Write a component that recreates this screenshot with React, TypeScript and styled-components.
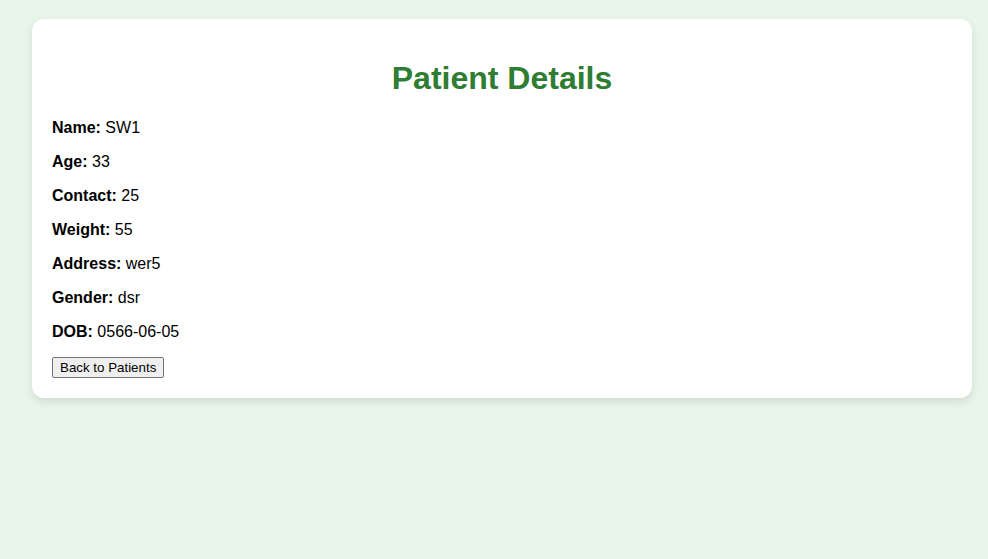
import React from 'react';
import styled, {createGlobalStyle} from 'styled-components';

const GlobalStyle = createGlobalStyle`
  html, body {
    margin: 0;
    background: #e8f5e9;
    font-family: "Liberation Sans", Arial, sans-serif;
  }
`

const Page = styled.div`
  padding: 19px 16px 20px 32px;
`

const Card = styled.div`
  background: #ffffff;
  border-radius: 12px;
  padding: 20px;
  box-shadow: 0 4px 10px rgba(0, 0, 0, 0.1);
`

const Title = styled.h1`
  color: #2e7d32;
  text-align: center;
  font-size: 32px;
  margin: 21.44px 0;
`

const Field = styled.p`
  font-size: 16px;
  color: #000;
  margin: 16px 0;
`

const BackButton = styled.button`
  font: 13.333px "Liberation Sans", Arial, sans-serif;
  height: 21px;
  padding: 1px 7px;
  color: #000;
  background: #efefef;
  border: 1px solid #767676;
  border-radius: 2px;
  cursor: pointer;
  vertical-align: top;
  &:hover { background: #e5e5e5; }
`

const patient = [
  ['Name', 'SW1'],
  ['Age', '33'],
  ['Contact', '25'],
  ['Weight', '55'],
  ['Address', 'wer5'],
  ['Gender', 'dsr'],
  ['DOB', '0566-06-05'],
];

function App() {
  return (
    <Page>
      <GlobalStyle />
      <Card>
        <Title>Patient Details</Title>
        {patient.map(([label, value]) => (
          <Field key={label}><strong>{label}:</strong> {value}</Field>
        ))}
        <BackButton>Back to Patients</BackButton>
      </Card>
    </Page>
  )
};

export default App;
